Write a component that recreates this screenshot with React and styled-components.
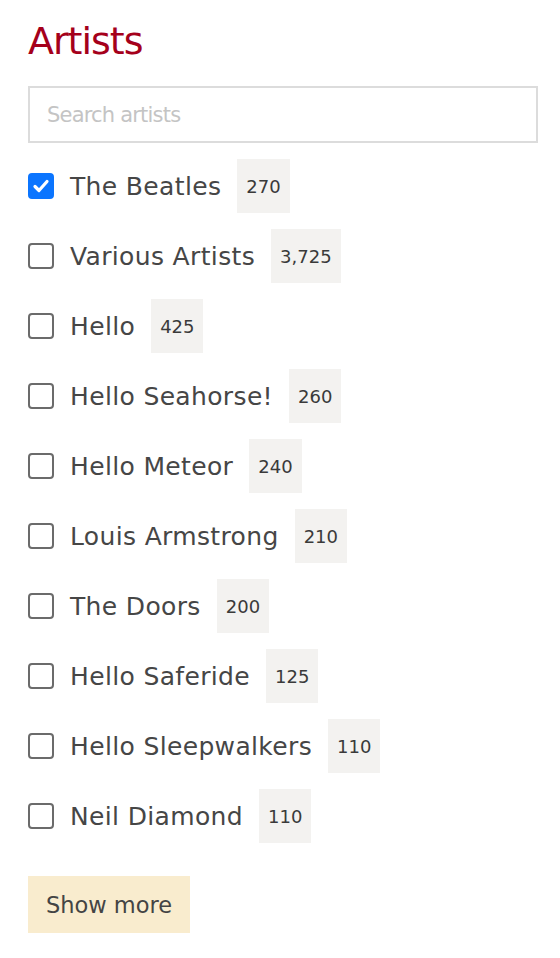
import React, { useState } from 'react';
import styled, { createGlobalStyle } from 'styled-components';

const Global = createGlobalStyle`
  body {
    margin: 0;
    background: #fff;
    font-family: "DejaVu Sans", Verdana, sans-serif;
  }
`;

const Page = styled.div`
  padding: 18px 22px 0 28px;
`;

const Title = styled.h1`
  margin: 0 0 22px;
  font-size: 38px;
  font-weight: normal;
  color: #a5001b;
  letter-spacing: -1px;
  line-height: 46px;
`;

const Search = styled.input`
  box-sizing: border-box;
  width: 100%;
  height: 57px;
  border: 2px solid #dcdcdc;
  padding: 0 17px;
  font-family: inherit;
  font-size: 21px;
  letter-spacing: -0.8px;
  color: #333;
  outline: none;
  &::placeholder {
    color: #c4c4c4;
  }
`;

const List = styled.div`
  display: flex;
  flex-direction: column;
  gap: 16px;
  margin-top: 16px;
`;

const Row = styled.label`
  display: flex;
  align-items: center;
  height: 54px;
  cursor: pointer;
`;

const Box = styled.span`
  box-sizing: border-box;
  width: 26px;
  height: 26px;
  border-radius: 4px;
  border: 2px solid ${(p) => (p.$checked ? '#0b75ff' : '#6b6b6b')};
  background: ${(p) => (p.$checked ? '#0b75ff' : '#fff')};
  display: flex;
  align-items: center;
  justify-content: center;
  margin-right: 16px;
`;

const Name = styled.span`
  font-size: 25px;
  color: #464646;
  letter-spacing: 0.35px;
  margin-right: 16px;
`;

const Count = styled.span`
  height: 54px;
  display: flex;
  align-items: center;
  padding: 0 9px;
  background: #f3f2f0;
  color: #3a3a3a;
  font-size: 18px;
`;

const More = styled.button`
  margin-top: 33px;
  height: 57px;
  padding: 0 18px;
  border: none;
  background: #f9ecce;
  color: #444;
  font-family: inherit;
  font-size: 22.5px;
  cursor: pointer;
`;

const artists = [
  ['The Beatles', '270'],
  ['Various Artists', '3,725'],
  ['Hello', '425'],
  ['Hello Seahorse!', '260'],
  ['Hello Meteor', '240'],
  ['Louis Armstrong', '210'],
  ['The Doors', '200'],
  ['Hello Saferide', '125'],
  ['Hello Sleepwalkers', '110'],
  ['Neil Diamond', '110'],
];

export default function App() {
  const [checked, setChecked] = useState({ 'The Beatles': true });

  return (
    <Page>
      <Global />
      <Title>Artists</Title>
      <Search placeholder="Search artists" />
      <List>
        {artists.map(([name, count]) => (
          <Row key={name} onClick={() => setChecked({ ...checked, [name]: !checked[name] })}>
            <Box $checked={!!checked[name]}>
              {checked[name] && (
                <svg width="18" height="18" viewBox="0 0 18 18">
                  <path d="M3 9.5l4 4 8-9" fill="none" stroke="#fff" strokeWidth="3.2" strokeLinecap="round" strokeLinejoin="round" />
                </svg>
              )}
            </Box>
            <Name>{name}</Name>
            <Count>{count}</Count>
          </Row>
        ))}
      </List>
      <More>Show more</More>
    </Page>
  );
}
